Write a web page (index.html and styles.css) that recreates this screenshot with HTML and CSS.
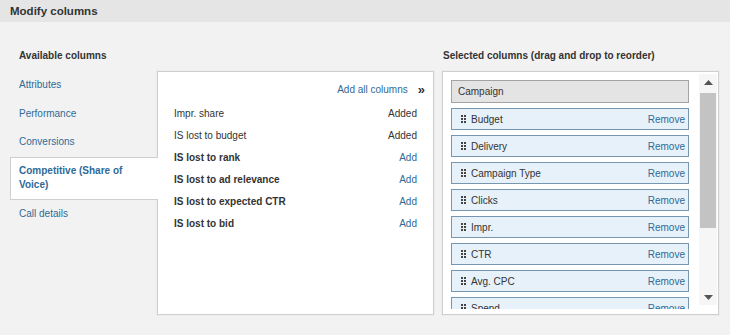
FILE: index.html
```html
<!DOCTYPE html>
<html lang="en-US">
  <head>
    <title>Modify columns</title>
    <meta charset="utf-8">
    <link rel="stylesheet" href="styles.css">
  </head>
  <body>
    <header class="app-bar">
      <h1>Modify columns</h1>
    </header>
    <div class="picker">
      <section class="available">
        <h3>Available columns</h3>
        <div class="available-body">
          <ul class="categories">
            <li><a href=".">Attributes</a></li>
            <li><a href=".">Performance</a></li>
            <li><a href=".">Conversions</a></li>
            <li class="current"><a href=".">Competitive (Share of Voice)</a></li>
            <li><a href=".">Call details</a></li>
          </ul>
          <div class="column-list">
            <div class="add-all"><a href=".">Add all columns</a><span class="chevrons">&raquo;</span></div>
            <div class="row added"><span>Impr. share</span><span>Added</span></div>
            <div class="row added"><span>IS lost to budget</span><span>Added</span></div>
            <div class="row"><span>IS lost to rank</span><a href=".">Add</a></div>
            <div class="row"><span>IS lost to ad relevance</span><a href=".">Add</a></div>
            <div class="row"><span>IS lost to expected CTR</span><a href=".">Add</a></div>
            <div class="row"><span>IS lost to bid</span><a href=".">Add</a></div>
          </div>
        </div>
      </section>
      <section class="selected">
        <h3>Selected columns (drag and drop to reorder)</h3>
        <div class="selected-box">
          <div class="selected-items">
            <div class="item fixed">Campaign</div>
            <div class="item"><svg class="grip" width="5" height="8" viewBox="0 0 5 8"><path d="M0 0h2v2H0zM3 0h2v2H3zM0 3h2v2H0zM3 3h2v2H3zM0 6h2v2H0zM3 6h2v2H3z"/></svg><span class="name">Budget</span><a href=".">Remove</a></div>
            <div class="item"><svg class="grip" width="5" height="8" viewBox="0 0 5 8"><path d="M0 0h2v2H0zM3 0h2v2H3zM0 3h2v2H0zM3 3h2v2H3zM0 6h2v2H0zM3 6h2v2H3z"/></svg><span class="name">Delivery</span><a href=".">Remove</a></div>
            <div class="item"><svg class="grip" width="5" height="8" viewBox="0 0 5 8"><path d="M0 0h2v2H0zM3 0h2v2H3zM0 3h2v2H0zM3 3h2v2H3zM0 6h2v2H0zM3 6h2v2H3z"/></svg><span class="name">Campaign Type</span><a href=".">Remove</a></div>
            <div class="item"><svg class="grip" width="5" height="8" viewBox="0 0 5 8"><path d="M0 0h2v2H0zM3 0h2v2H3zM0 3h2v2H0zM3 3h2v2H3zM0 6h2v2H0zM3 6h2v2H3z"/></svg><span class="name">Clicks</span><a href=".">Remove</a></div>
            <div class="item"><svg class="grip" width="5" height="8" viewBox="0 0 5 8"><path d="M0 0h2v2H0zM3 0h2v2H3zM0 3h2v2H0zM3 3h2v2H3zM0 6h2v2H0zM3 6h2v2H3z"/></svg><span class="name">Impr.</span><a href=".">Remove</a></div>
            <div class="item"><svg class="grip" width="5" height="8" viewBox="0 0 5 8"><path d="M0 0h2v2H0zM3 0h2v2H3zM0 3h2v2H0zM3 3h2v2H3zM0 6h2v2H0zM3 6h2v2H3z"/></svg><span class="name">CTR</span><a href=".">Remove</a></div>
            <div class="item"><svg class="grip" width="5" height="8" viewBox="0 0 5 8"><path d="M0 0h2v2H0zM3 0h2v2H3zM0 3h2v2H0zM3 3h2v2H3zM0 6h2v2H0zM3 6h2v2H3z"/></svg><span class="name">Avg. CPC</span><a href=".">Remove</a></div>
            <div class="item"><svg class="grip" width="5" height="8" viewBox="0 0 5 8"><path d="M0 0h2v2H0zM3 0h2v2H3zM0 3h2v2H0zM3 3h2v2H3zM0 6h2v2H0zM3 6h2v2H3z"/></svg><span class="name">Spend</span><a href=".">Remove</a></div>
          </div>
          <div class="scrollbar">
            <div class="scroll-btn"><svg width="9" height="5" viewBox="0 0 9 5"><path d="M4.5 0L9 5H0z"/></svg></div>
            <div class="scroll-track"><div class="scroll-thumb"></div></div>
            <div class="scroll-btn"><svg width="9" height="5" viewBox="0 0 9 5"><path d="M0 0h9L4.5 5z"/></svg></div>
          </div>
        </div>
      </section>
    </div>
  </body>
</html>
```

FILE: styles.css
```css
body {
  margin: 0;
  font-family: 'Liberation Sans', Arial, sans-serif;
  font-size: 10px;
  color: #333;
  background-color: #f2f2f2;
  height: 335px;
  overflow: hidden;
}
h1, h3, ul {
  margin: 0;
  padding: 0;
}
a {
  color: #2f6a98;
  text-decoration: none;
}
.app-bar {
  height: 22px;
  background-color: #e5e5e5;
  padding-left: 10px;
}
.app-bar h1 {
  font-size: 11.5px;
  line-height: 22px;
  font-weight: bold;
  color: #333;
}

.picker {
  display: flex;
  gap: 8px;
  padding: 27px 0 0 10px;
}
.picker h3 {
  font-size: 10px;
  line-height: 14px;
  font-weight: bold;
  margin-bottom: 8px;
}
.available h3 {
  padding-left: 9px;
}
.selected h3 {
  padding-left: 1px;
}
.available-body {
  display: flex;
}

/* category tabs */
.categories {
  list-style: none;
  width: 147px;
}
.categories li {
  padding: 7px 9px 7.5px;
  line-height: 14px;
}
.categories li.current {
  position: relative;
  z-index: 1;
  margin-right: -1px;
  background-color: #fff;
  border: 1px solid #cfcfcf;
  border-right: 0;
  padding: 6.5px 20px 6.5px 8px;
  font-weight: bold;
}

.column-list {
  width: 277px;
  height: 244px;
  box-sizing: border-box;
  background-color: #fff;
  border: 1px solid #cfcfcf;
  box-shadow: 0 0 0 1px #ececec;
  padding: 10px 16px 0;
}
.add-all {
  display: flex;
  justify-content: flex-end;
  align-items: center;
  line-height: 14px;
  margin: 1px -8px 6px 0;
}
.chevrons {
  font-size: 13px;
  font-weight: bold;
  color: #333;
  margin-left: 10px;
}
.row {
  display: flex;
  justify-content: space-between;
  line-height: 22px;
  font-weight: bold;
}
.row.added {
  font-weight: normal;
}
.row a {
  font-weight: normal;
}

/* selected columns */
.selected-box {
  display: flex;
  width: 277px;
  height: 244px;
  box-sizing: border-box;
  background-color: #fff;
  border: 1px solid #cfcfcf;
  box-shadow: 0 0 0 1px #ececec;
}
.selected-items {
  flex: 1;
  display: flex;
  flex-direction: column;
  gap: 5px;
  padding: 8px 10px 0 8px;
  margin-bottom: 5px;
  overflow: hidden;
}
.item {
  flex: none;
  display: flex;
  align-items: center;
  height: 22px;
  box-sizing: border-box;
  border: 1px solid #7797b1;
  background-color: #e7f1f9;
  padding: 0 3px 0 9px;
}
.item.fixed {
  height: 23px;
  border-color: #a3a3a3;
  background-color: #e4e4e4;
  padding-left: 6px;
}
.grip {
  fill: #444;
  margin-right: 5px;
}
.item .name {
  flex: 1;
}

.scrollbar {
  width: 18px;
  margin: 2px 1px 9px 0;
  display: flex;
  flex-direction: column;
  background-color: #f6f6f6;
}
.scroll-btn {
  height: 16px;
  display: flex;
  align-items: center;
  justify-content: center;
  fill: #555;
}
.scroll-track {
  flex: 1;
}
.scroll-thumb {
  margin: 3px 1px 0;
  height: 135px;
  background-color: #c3c3c3;
}
```
